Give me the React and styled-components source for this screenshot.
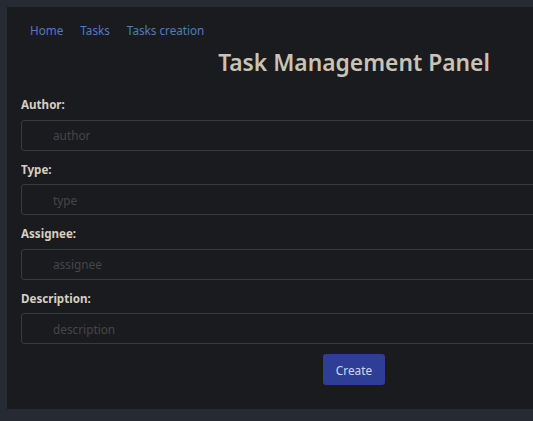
import styled, { createGlobalStyle } from 'styled-components';

const GlobalStyle = createGlobalStyle`
  html, body {
    margin: 0;
    padding: 0;
    background: #262a33;
    font-family: "Noto Sans", "Open Sans", sans-serif;
  }
  body {
    padding: 7px;
    overflow: hidden;
  }
`

const Panel = styled.div`
  width: 694px;
  height: 402px;
  box-sizing: border-box;
  background: #1a1b1e;
  padding: 12px 14px 0 14px;
`

const Nav = styled.nav`
  display: flex;
  gap: 17px;
  padding-left: 9px;
  height: 22px;
  align-items: center;
`

const NavLink = styled.a`
  color: #4f7cc4;
  font-size: 11.7px;
  text-decoration: none;
  cursor: pointer;
`

const Title = styled.h1`
  margin: 6px 0 0 0;
  text-align: center;
  font-size: 22.8px;
  font-weight: 600;
  color: #c9c3b6;
  line-height: 32px;
`

const Form = styled.form`
  display: flex;
  flex-direction: column;
  margin-top: 17px;
`

const Field = styled.div`
  display: flex;
  flex-direction: column;
  margin-bottom: 10px;
`

const Label = styled.label`
  font-size: 11.6px;
  font-weight: 700;
  color: #d6cfc2;
  line-height: 18px;
  margin-bottom: 5.5px;
`

const Input = styled.input`
  height: 31px;
  box-sizing: border-box;
  background: #1a1b1e;
  border: 1px solid #393a3d;
  border-radius: 3px;
  padding: 0 0 0 31px;
  font-family: inherit;
  font-size: 11.8px;
  color: #ccc;
  &::placeholder {
    color: #45464a;
  }
  &:focus {
    outline: none;
  }
`

const Actions = styled.div`
  display: flex;
  justify-content: center;
`

const Button = styled.button`
  width: 62px;
  height: 31px;
  background: #2e3e96;
  color: #d4d6ea;
  border: none;
  border-radius: 3px;
  font-family: inherit;
  font-size: 11.8px;
  cursor: pointer;
`

const fields = [
  { label: 'Author:', name: 'author' },
  { label: 'Type:', name: 'type' },
  { label: 'Assignee:', name: 'assignee' },
  { label: 'Description:', name: 'description' },
]

export default function App() {
  return (
    <>
      <GlobalStyle />
      <Panel>
        <Nav>
          <NavLink>Home</NavLink>
          <NavLink>Tasks</NavLink>
          <NavLink>Tasks creation</NavLink>
        </Nav>
        <Title>Task Management Panel</Title>
        <Form onSubmit={e => e.preventDefault()}>
          {fields.map(f => (
            <Field key={f.name}>
              <Label>{f.label}</Label>
              <Input placeholder={f.name} />
            </Field>
          ))}
          <Actions>
            <Button type="submit">Create</Button>
          </Actions>
        </Form>
      </Panel>
    </>
  )
}
